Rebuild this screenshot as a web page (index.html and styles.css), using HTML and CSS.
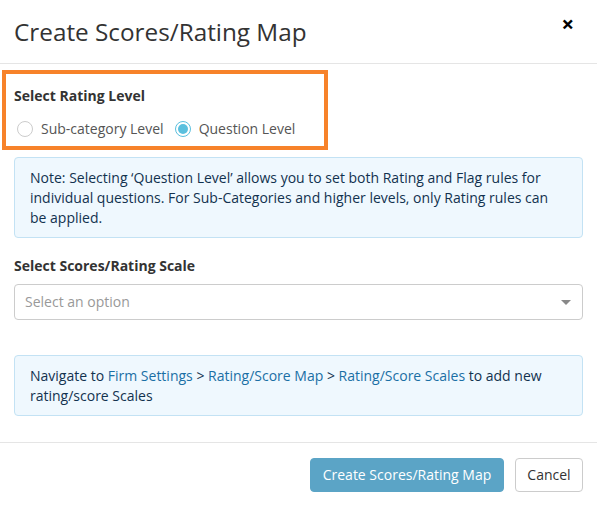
FILE: index.html
```html
<!DOCTYPE html>
<html>
<head>
<meta charset="utf-8">
<link rel="stylesheet" href="styles.css">
</head>
<body>
<div class="modal">
  <div class="modal-header">
    <h1 class="modal-title">Create Scores/Rating Map</h1>
    <span class="close">×</span>
  </div>
  <div class="modal-body">
    <div class="highlight">
      <div class="label">Select Rating Level</div>
      <div class="radios">
        <label class="radio"><span class="circle"></span>Sub-category Level</label>
        <label class="radio"><span class="circle checked"></span>Question Level</label>
      </div>
    </div>
    <div class="info note">Note: Selecting ‘Question Level’ allows you to set both Rating and Flag rules for individual questions. For Sub-Categories and higher levels, only Rating rules can be applied.</div>
    <div class="label scale-label">Select Scores/Rating Scale</div>
    <div class="select">
      <span class="placeholder">Select an option</span>
      <span class="arrow"></span>
    </div>
    <div class="info nav">Navigate to <a>Firm Settings</a> &gt; <a>Rating/Score Map</a> &gt; <a>Rating/Score Scales</a> to add new rating/score Scales</div>
  </div>
  <div class="modal-footer">
    <button class="btn btn-primary">Create Scores/Rating Map</button>
    <button class="btn btn-default">Cancel</button>
  </div>
</div>
</body>
</html>
```
FILE: styles.css
```css
* { box-sizing: border-box; }
html, body { margin: 0; padding: 0; }
body {
  font-family: "Open Sans", "Liberation Sans", sans-serif;
  font-size: 14px;
  line-height: 20px;
  color: #333;
  background: #fff;
  width: 597px;
  height: 505px;
  overflow: hidden;
}
.modal { width: 597px; height: 505px; background: #fff; }
.modal-header {
  display: flex;
  justify-content: space-between;
  align-items: flex-start;
  padding: 15px 14px 15px 14px;
  border-bottom: 1px solid #e5e5e5;
}
.modal-title {
  margin: 0;
  font-size: 24.3px;
  font-weight: 400;
  line-height: 33px;
  color: #333;
}
.close {
  font-size: 22px;
  font-weight: 700;
  line-height: 16px;
  color: #000;
  margin: 0 9px 0 0;
}
.modal-body { padding: 6px 14px 0 14px; }
.highlight {
  width: 326px;
  margin-left: -12px;
  border: 4px solid #f7822a;
  padding: 12px 8px 7px 8px;
}
.label { font-weight: 700; color: #333; }
.radios { display: flex; margin-top: 13px; }
.radio { display: flex; align-items: center; color: #555; margin-right: 8px; }
.circle {
  width: 16px; height: 16px; border-radius: 50%;
  border: 1px solid #ccc; background: #fff;
  margin-right: 8px; margin-left: 3px;
  position: relative;
}
.circle.checked { border-color: #5bc0de; }
.circle.checked::after {
  content: ""; position: absolute; left: 2px; top: 2px;
  width: 10px; height: 10px; border-radius: 50%; background: #5bc0de;
}
.info {
  margin-top: 7px;
  background: #eff8fe;
  border: 1px solid #c3e2f4;
  border-radius: 4px;
  padding: 10px 15px 9px 15px;
  color: #12324f;
}
.info a { color: #1a6fa5; }
.scale-label { margin-top: 18px; }
.select {
  margin-top: 8px;
  height: 36px;
  border: 1px solid #ccc;
  border-radius: 4px;
  display: flex;
  align-items: center;
  justify-content: space-between;
  padding: 0 11px 0 10px;
}
.placeholder { color: #999; }
.arrow {
  width: 0; height: 0;
  border-left: 5px solid transparent;
  border-right: 5px solid transparent;
  border-top: 5px solid #888;
}
.nav { margin-top: 35px; padding-bottom: 9px; }
.modal-footer {
  margin-top: 26px;
  border-top: 1px solid #e5e5e5;
  display: flex;
  justify-content: flex-end;
  gap: 11px;
  padding: 15px 14px 0 14px;
}
.btn {
  font-family: inherit;
  font-size: 14px;
  line-height: 20px;
  height: 34px;
  padding: 6px 0;
  border-radius: 4px;
  border: 1px solid transparent;
  white-space: nowrap;
  text-align: center;
}
.btn-primary { background: #5ba4c6; border-color: #5ba4c6; color: #fff; width: 194px; }
.btn-default { background: #fff; border-color: #ccc; color: #333; width: 68px; }
```
